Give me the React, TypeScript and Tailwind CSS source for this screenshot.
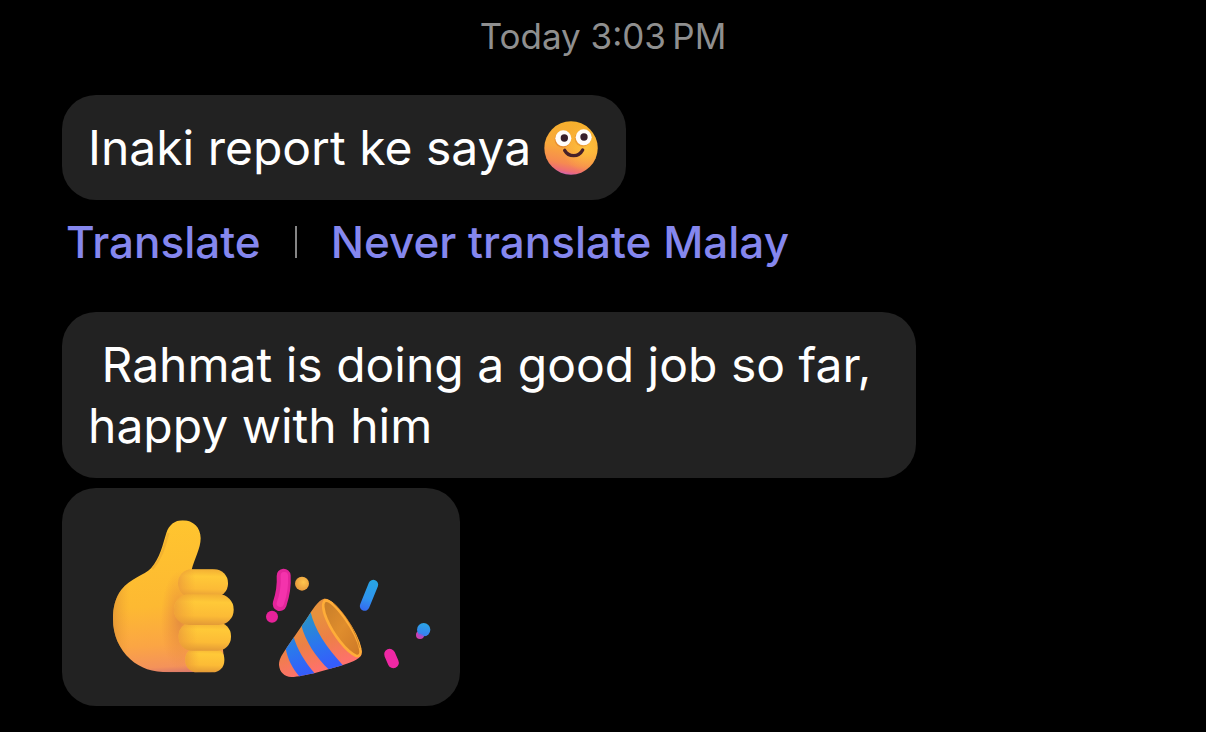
import type { ReactNode } from "react";

function SmilingFace() {
  return (
    <svg viewBox="41 50 162 162" className="h-[54px] w-[54px] shrink-0" role="img" aria-label="Smiling face">
      <defs>
        <linearGradient id="face" x1="0.62" y1="0" x2="0.42" y2="1">
          <stop offset="0" stopColor="#f6b02c" />
          <stop offset="0.5" stopColor="#f9a83a" />
          <stop offset="0.8" stopColor="#f68a50" />
          <stop offset="0.93" stopColor="#ee6d74" />
          <stop offset="1" stopColor="#cf62ae" />
        </linearGradient>
        <radialGradient id="faceGlow" cx="0.78" cy="0.5" r="0.45">
          <stop offset="0" stopColor="#ffc63c" stopOpacity="0.8" />
          <stop offset="1" stopColor="#ffc63c" stopOpacity="0" />
        </radialGradient>
      </defs>
      <circle cx="122" cy="131" r="80" fill="url(#face)" />
      <circle cx="122" cy="131" r="80" fill="url(#faceGlow)" />
      <circle cx="97" cy="106" r="24" fill="#dc7c2b" opacity="0.6" />
      <circle cx="157" cy="103" r="24" fill="#dc7c2b" opacity="0.45" />
      <circle cx="99" cy="102" r="24" fill="#fffdfa" />
      <circle cx="160" cy="99" r="24" fill="#fffdfa" />
      <circle cx="102" cy="101" r="11" fill="#38202b" />
      <circle cx="161" cy="98" r="11" fill="#38202b" />
      <path d="M103 138 Q112 154 130 154 Q148 154 157 137" fill="none" stroke="#472129" strokeWidth="10" strokeLinecap="round" />
    </svg>
  );
}

function ThumbsUp() {
  return (
    <svg viewBox="30 33 378 486" className="h-[162px] w-[126px] shrink-0" role="img" aria-label="Thumbs up">
      <defs>
        <linearGradient id="hand" x1="0.55" y1="0" x2="0.6" y2="1">
          <stop offset="0" stopColor="#ffc52f" />
          <stop offset="0.55" stopColor="#fdb932" />
          <stop offset="0.8" stopColor="#fba544" />
          <stop offset="0.94" stopColor="#f4925a" />
          <stop offset="1" stopColor="#cd6c70" />
        </linearGradient>
        <linearGradient id="handEdge" x1="0" y1="0" x2="1" y2="0">
          <stop offset="0" stopColor="#d98a35" stopOpacity="0.6" />
          <stop offset="0.14" stopColor="#e99a30" stopOpacity="0" />
        </linearGradient>
        <radialGradient id="palmShade" cx="0.5" cy="0.5" r="0.5">
          <stop offset="0" stopColor="#df8540" stopOpacity="0.8" />
          <stop offset="1" stopColor="#e9893c" stopOpacity="0" />
        </radialGradient>
        <linearGradient id="finger" x1="0.5" y1="0" x2="0.45" y2="1">
          <stop offset="0" stopColor="#f3b034" />
          <stop offset="0.25" stopColor="#ffc938" />
          <stop offset="0.7" stopColor="#fcbb36" />
          <stop offset="1" stopColor="#e39a36" />
        </linearGradient>
        <linearGradient id="fingerSide" x1="0" y1="0" x2="1" y2="0">
          <stop offset="0" stopColor="#e9953a" stopOpacity="0.7" />
          <stop offset="0.35" stopColor="#f0a234" stopOpacity="0" />
        </linearGradient>
        <clipPath id="handClip">
          <path d="M248 46 C224 46 207 60 199 84 C188 120 180 158 153 190 C133 211 91 220 64 254 C46 278 39 306 39 342 C39 390 57 431 91 463 C121 490 157 502 207 502 L330 502 C348 500 355 492 362 480 L372 460 L340 194 L275 194 C283 163 302 130 302 100 C302 68 280 46 248 46 Z" />
        </clipPath>
      </defs>
      <g clipPath="url(#handClip)">
        <rect x="30" y="40" width="380" height="470" fill="url(#hand)" />
        <rect x="39" y="180" width="345" height="325" fill="url(#handEdge)" />
        <ellipse cx="240" cy="345" rx="58" ry="150" fill="url(#palmShade)" />
      </g>
      <path d="M205 84 C194 122 185 160 157 192" fill="none" stroke="#d89231" strokeWidth="7" opacity="0.3" />
      <rect x="256" y="428" width="117" height="74" rx="35" fill="url(#finger)" />
      <rect x="256" y="428" width="117" height="74" rx="35" fill="url(#fingerSide)" />
      <rect x="236" y="352" width="157" height="85" rx="41" fill="url(#finger)" />
      <rect x="236" y="352" width="157" height="85" rx="41" fill="url(#fingerSide)" />
      <rect x="234" y="193" width="150" height="84" rx="41" fill="url(#finger)" />
      <rect x="234" y="193" width="150" height="84" rx="41" fill="url(#fingerSide)" />
      <rect x="222" y="268" width="179" height="92" rx="45" fill="url(#finger)" />
      <rect x="222" y="268" width="179" height="92" rx="45" fill="url(#fingerSide)" />
    </svg>
  );
}

function PartyPopper() {
  return (
    <svg viewBox="42 -117 504 486" className="h-[162px] w-[168px] shrink-0" role="img" aria-label="Party popper">
      <defs>
        <linearGradient id="cone" gradientUnits="userSpaceOnUse" x1="150" y1="200" x2="200" y2="350">
          <stop offset="0" stopColor="#e7913d" />
          <stop offset="0.45" stopColor="#ec8046" />
          <stop offset="1" stopColor="#ff716d" />
        </linearGradient>
        <linearGradient id="stripe" gradientUnits="userSpaceOnUse" x1="145" y1="205" x2="195" y2="345">
          <stop offset="0" stopColor="#298fcb" />
          <stop offset="0.5" stopColor="#2b77ed" />
          <stop offset="1" stopColor="#355dfb" />
        </linearGradient>
        <linearGradient id="inside" x1="0" y1="0" x2="1" y2="1">
          <stop offset="0" stopColor="#c67d29" />
          <stop offset="0.5" stopColor="#df8d2d" />
          <stop offset="1" stopColor="#cd7826" />
        </linearGradient>
        <linearGradient id="blue" gradientUnits="userSpaceOnUse" x1="370" y1="80" x2="345" y2="165">
          <stop offset="0" stopColor="#28a4e4" />
          <stop offset="0.6" stopColor="#2f94ee" />
          <stop offset="1" stopColor="#356cf0" />
        </linearGradient>
        <linearGradient id="ball" x1="0.6" y1="0" x2="0.4" y2="1">
          <stop offset="0" stopColor="#2aa6e6" />
          <stop offset="1" stopColor="#3a7cf0" />
        </linearGradient>
        <radialGradient id="gold" cx="0.6" cy="0.4" r="0.6">
          <stop offset="0" stopColor="#ffc64d" />
          <stop offset="1" stopColor="#e89a3c" />
        </radialGradient>
        <clipPath id="coneClip">
          <path d="M222 131 C204 136 187 164 170 191 L112 275 C97 298 87 310 87 330 C89 352 103 365 124 366 C144 366 170 359 195 354 L270 333 C301 324 329 312 334 300 C344 260 257 125 222 131 Z" />
        </clipPath>
      </defs>
      <g clipPath="url(#coneClip)">
        <rect x="80" y="125" width="260" height="245" fill="url(#cone)" />
        <path d="M182 172 C193 222 229 278 280 332 L239 346 C196 306 166 258 154 211 Z" fill="url(#stripe)" />
        <path d="M130 242 C142 285 164 319 195 356 L151 368 C127 341 113 313 107 280 Z" fill="url(#stripe)" />
      </g>
      <path d="M225 136 C216 145 219 166 230 193 C249 238 289 290 319 303 C330 305 334 295 331 283 C320 229 252 134 225 136 Z" fill="url(#inside)" stroke="#ffad38" strokeWidth="8" strokeLinejoin="round" />
      <path d="M250 145 C286 174 319 232 329 278" fill="none" stroke="#ad661f" strokeWidth="3" opacity="0.55" />
      <path d="M101 62 C103 94 98 120 89 147" fill="none" stroke="#e3259b" strokeWidth="42" strokeLinecap="round" />
      <path d="M103 62 C105 94 100 120 91 145" fill="none" stroke="#f433ac" strokeWidth="22" strokeLinecap="round" />
      <circle cx="66" cy="185" r="18" fill="#e72299" />
      <circle cx="156" cy="86" r="21" fill="url(#gold)" />
      <path d="M370 89 L344 153" fill="none" stroke="url(#blue)" strokeWidth="29" strokeLinecap="round" />
      <circle cx="510" cy="240" r="12" fill="#d03fb0" />
      <circle cx="521" cy="224" r="20" fill="url(#ball)" />
      <path d="M502 238 C510 234 518 238 522 244 C516 252 503 251 502 238 Z" fill="#a44fc8" opacity="0.7" />
      <path d="M419 298 L430 323" fill="none" stroke="#ef28a4" strokeWidth="33" strokeLinecap="round" />
    </svg>
  );
}

function Bubble({ children, className }: { children: ReactNode; className: string }) {
  return <div className={`w-fit rounded-[34px] bg-[#222222] ${className}`}>{children}</div>;
}

export default function App() {
  return (
    <main className="min-h-screen bg-black px-[62px] pt-4 pb-6 font-['Inter','Liberation_Sans',sans-serif] text-white">
      <p className="text-center text-[35px] leading-10 text-[#8f8f8f]">
        <time>Today 3:03&#8239;PM</time>
      </p>

      <section className="mt-[39px]">
        <Bubble className="flex items-center gap-[13px] py-[22px] pr-7 pl-[26px]">
          <p className="text-[48px] leading-[61px]">Inaki report ke saya</p>
          <SmilingFace />
        </Bubble>
        <div className="mt-4 flex items-center pl-1 text-[44px] leading-[52px] font-medium text-[#8587ee]">
          <button type="button">Translate</button>
          <span className="mx-[34px] h-8 w-[2px] bg-[#858585]" />
          <button type="button">Never translate Malay</button>
        </div>
      </section>

      <section className="mt-11 flex flex-col gap-[10px]">
        <Bubble className="max-w-[854px] py-[22px] pr-10 pl-[26px]">
          <p className="text-[48px] leading-[61px] whitespace-pre-wrap">{" Rahmat is doing a good job so far, happy with him"}</p>
        </Bubble>
        <Bubble className="flex gap-7 py-7 pr-7 pl-12">
          <ThumbsUp />
          <PartyPopper />
        </Bubble>
      </section>
    </main>
  );
}
